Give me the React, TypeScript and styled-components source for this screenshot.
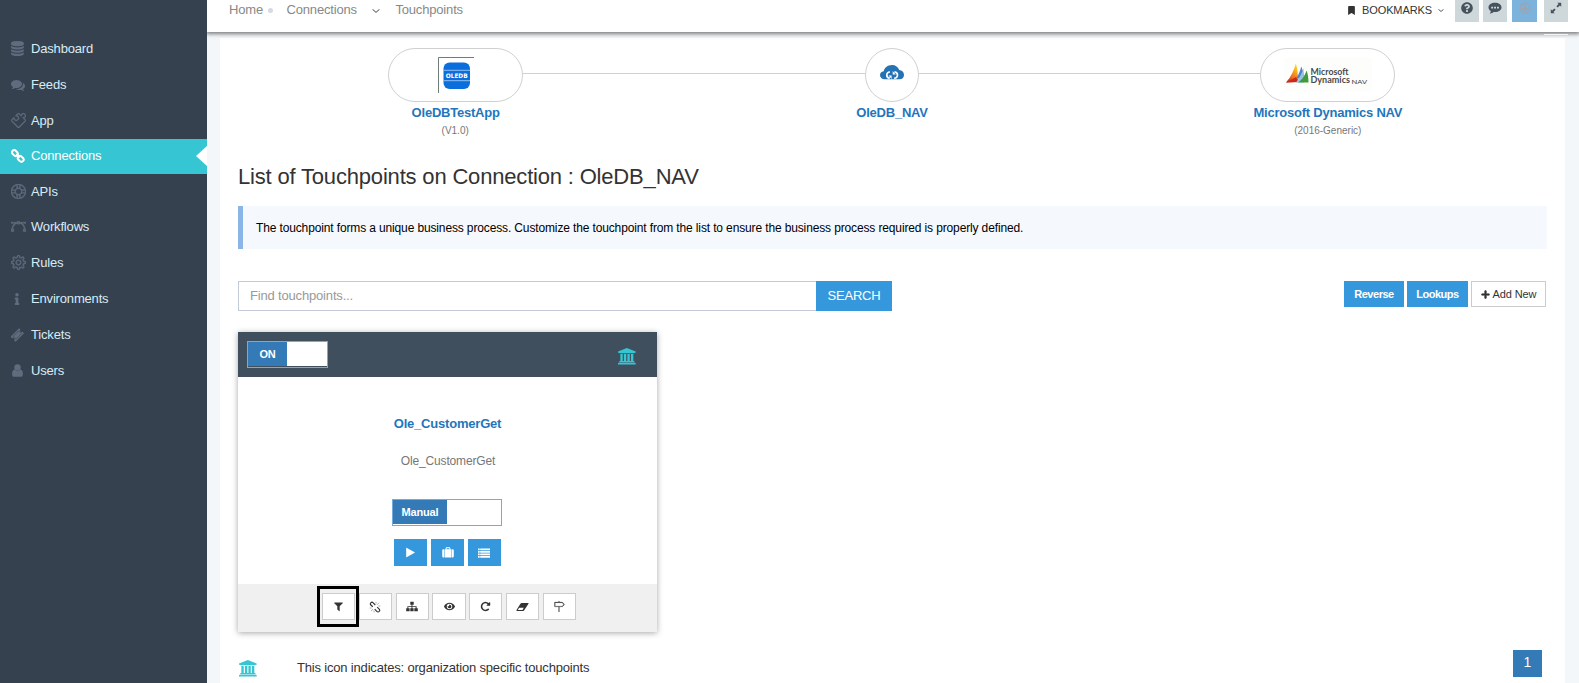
import React from 'react';
import styled, { createGlobalStyle, css } from 'styled-components';
import { FaBookmark, FaInfo, FaPlus, FaQuestionCircle, FaEye } from 'react-icons/fa';
import { SlDirection, SlPuzzle, SlSettings, SlSupport, SlVector } from 'react-icons/sl';

const GlobalStyle = createGlobalStyle`
  *, *::before, *::after { box-sizing: border-box; }
  body {
    margin: 0;
    overflow: hidden;
    background: #f4f7f9;
    color: #333;
    font: 13px/18px "Liberation Sans", Arial, sans-serif;
  }
  button, input { font-family: inherit; margin: 0; }
  svg { display: block; flex: none; }
`;

const Page = styled.div`
  display: flex;
  height: 683px;
  overflow: hidden;
`;

const Sidebar = styled.nav`
  width: 207px;
  flex: none;
  padding-top: 31px;
  background: #364150;
`;

const NavItem = styled.a<{ $active?: boolean; $tight?: boolean }>`
  display: flex;
  align-items: center;
  height: 35px;
  margin-bottom: ${p => (p.$tight ? 0 : 1)}px;
  padding: ${p => (p.$active ? '0 0 1px 11px' : '1px 0 0 11px')};
  color: ${p => (p.$active ? '#fff' : '#d8ecf5')};
  background: ${p => (p.$active ? '#36c6d3' : 'transparent')};
  letter-spacing: -0.17px;
  position: relative;
  ${p => p.$active && css`
    &::after {
      content: '';
      position: absolute;
      right: 0;
      top: 7px;
      border: solid transparent;
      border-width: 10.5px 11px 10.5px 0;
      border-right-color: #fff;
    }
  `}
`;

const NavIcon = styled.span<{ $active?: boolean }>`
  display: flex;
  width: 20px;
  padding-bottom: 1px;
  color: ${p => (p.$active ? '#fff' : '#606c7d')};
`;

const Main = styled.div`
  flex: 1;
  min-width: 0;
  display: flex;
  flex-direction: column;
`;

const TopBar = styled.header`
  height: 32px;
  flex: none;
  display: flex;
  padding: 0 11px 0 22px;
  background: #fff;
  box-shadow: 0 1px 4px 1px rgba(0, 0, 0, 0.5);
  clip-path: inset(0 0 -8px 0);
  position: relative;
  z-index: 1;
  color: #888;
`;

const Crumb = styled.a<{ $gap: number }>`
  height: 18px;
  margin: 1px ${p => p.$gap}px 0 0;
  letter-spacing: -0.17px;
`;

const Dot = styled.i`
  width: 5px;
  height: 5px;
  margin: 8px 13.5px 0 0;
  border-radius: 50%;
  background: #d5dbe0;
`;

const CrumbArrow = styled.span`
  margin: 9px 15.5px 0 0;
  color: #777;
`;

const Bookmarks = styled.div`
  display: flex;
  height: 18px;
  margin: 1px 11px 0 auto;
  align-items: center;
  color: #333;
  font-size: 11px;
  letter-spacing: -0.1px;
  gap: 6px;
`;

const Tool = styled.button<{ $gap: number; $on?: boolean; $tail?: boolean }>`
  display: flex;
  justify-content: center;
  width: ${p => (p.$on ? 25 : 24)}px;
  height: 22px;
  margin-right: ${p => p.$gap}px;
  padding: 2px 0 0;
  border: 0;
  background: ${p => (p.$on ? '#7cb3dc' : '#ced7da')};
  color: ${p => (p.$on ? '#9aa5b5' : '#46535f')};
  position: relative;
  ${p => p.$tail && css`
    &::after {
      content: '';
      position: absolute;
      left: 0;
      right: 0;
      top: 34px;
      height: 1px;
      background: #f2f2f2;
    }
  `}
`;

const Panel = styled.main`
  flex: 1;
  margin: 6px 14px 0 13px;
  padding: 10px 18px 0;
  background: #fff;
`;

const Flow = styled.section`
  display: grid;
  grid-template-columns: repeat(3, 1fr);
  height: 110px;
  margin: 0 1px 0 -1px;
`;

const FlowStep = styled.div`
  display: flex;
  flex-direction: column;
  align-items: center;
`;

const FlowTrack = styled.div<{ $left?: boolean; $right?: boolean }>`
  display: flex;
  width: 100%;
  height: 54px;
  &::before, &::after {
    content: '';
    flex: 1;
    height: 1px;
    margin-top: 25px;
  }
  &::before { background: ${p => (p.$left ? '#d0d0d0' : 'transparent')}; }
  &::after { background: ${p => (p.$right ? '#d0d0d0' : 'transparent')}; }
`;

const Pill = styled.div<{ $w: number }>`
  display: flex;
  justify-content: center;
  align-items: center;
  width: ${p => p.$w}px;
  height: 54px;
  padding-left: 1px;
  border: 1px solid #d0d0d0;
  border-radius: 27px;
`;

const FlowName = styled.a<{ $flush?: boolean }>`
  margin-top: 2px;
  padding-left: ${p => (p.$flush ? 0 : 1)}px;
  height: 18px;
  color: #1f76bd;
  font-weight: bold;
  letter-spacing: -0.22px;
`;

const FlowNote = styled.small`
  font-size: 10px;
  color: #777;
`;

const Title = styled.h1`
  height: 48px;
  margin: 0;
  padding-top: 4px;
  color: #333;
  font-size: 22px;
  font-weight: normal;
  line-height: 30px;
  letter-spacing: -0.18px;
`;

const Note = styled.p`
  height: 43px;
  margin: 0 0 32px;
  padding: 1px 13px 0;
  border-left: 5px solid #8bb4e7;
  background: #f5f8fd;
  color: #000;
  font-size: 12px;
  line-height: 43px;
  letter-spacing: -0.135px;
`;

const Toolbar = styled.div`
  display: flex;
  height: 51px;
  align-items: flex-start;
`;

const SearchInput = styled.input`
  width: 578px;
  height: 30px;
  padding: 0 11px 2px;
  border: 1px solid #c2cad8;
  border-right: 0;
  font-size: 13px;
  letter-spacing: -0.17px;
  &::placeholder { color: #999; opacity: 1; }
`;

const SearchButton = styled.button`
  width: 76px;
  height: 30px;
  padding: 0 0 2px;
  border: 0;
  background: #3598dc;
  color: #fff;
  font-size: 13px;
  letter-spacing: -0.2px;
`;

const Actions = styled.div`
  display: flex;
  gap: 3px;
  margin-left: auto;
  padding-right: 1px;
`;

const Action = styled.button<{ $w: number; $plain?: boolean }>`
  display: flex;
  align-items: center;
  justify-content: center;
  gap: 3px;
  width: ${p => p.$w}px;
  height: 26px;
  padding: 0;
  border: ${p => (p.$plain ? '1px solid #ccc' : '0')};
  background: ${p => (p.$plain ? '#fff' : '#3598dc')};
  color: ${p => (p.$plain ? '#333' : '#fff')};
  font-size: 11px;
  font-weight: ${p => (p.$plain ? 'normal' : 'bold')};
  letter-spacing: ${p => (p.$plain ? -0.1 : -0.48)}px;
`;

const Card = styled.article`
  width: 419px;
  height: 300px;
  display: flex;
  flex-direction: column;
  box-shadow: 0 1px 6px rgba(0, 0, 0, 0.35);
`;

const CardHead = styled.div`
  display: flex;
  justify-content: space-between;
  height: 45px;
  padding: 9px 21px 0 9px;
  background: #3f4f5e;
  color: #36c6d3;
`;

const BankIcon = styled.span`
  padding-top: 7px;
`;

const Switch = styled.div<{ $w: number; $on: number; $dark?: boolean }>`
  display: flex;
  width: ${p => p.$w}px;
  height: 27px;
  padding-bottom: 1px;
  border: 1px solid #75aadb;
  background: ${p => (p.$dark ? '#3f4f5e' : '#fff')};
  &::after {
    content: '';
    flex: 1;
    background: #fff;
  }
  & > span {
    width: ${p => p.$on}px;
    background: #337ab7;
    color: #fff;
    font-size: 11px;
    font-weight: bold;
    line-height: 24px;
    text-align: center;
    letter-spacing: -0.15px;
  }
`;

const CardBody = styled.div`
  display: flex;
  flex-direction: column;
  align-items: center;
  height: 207px;
  padding: 38px 1px 0 0;
`;

const CardTitle = styled.a`
  height: 18px;
  padding-left: 1px;
  color: #1f76bd;
  font-weight: bold;
  letter-spacing: -0.2px;
`;

const CardText = styled.p`
  height: 18px;
  margin: 19px 0 29px;
  padding-left: 2px;
  color: #777;
  font-size: 12px;
  letter-spacing: -0.15px;
`;

const Buttons = styled.div<{ $top: number; $shift?: number }>`
  display: flex;
  justify-content: center;
  gap: 3.7px;
  padding: ${p => p.$top}px 0 0 ${p => p.$shift ?? 0}px;
`;

const IconButton = styled.button<{ $blue?: boolean; $marked?: boolean }>`
  display: flex;
  align-items: center;
  justify-content: center;
  width: 33.2px;
  height: 27px;
  padding: 0;
  border: ${p => (p.$blue ? '0' : '1px solid #ccc')};
  background: ${p => (p.$blue ? '#3598dc' : '#fff')};
  color: ${p => (p.$blue ? '#fff' : '#333')};
  position: relative;
  ${p => p.$marked && css`
    z-index: 1;
    &::after {
      content: '';
      position: absolute;
      inset: -8px -5px -8px -6px;
      border: 3px solid #000;
    }
  `}
`;

const CardFoot = styled.div`
  height: 48px;
  background: #f0f0f0;
`;

const Legend = styled.footer`
  display: flex;
  align-items: flex-start;
  padding: 18px 5px 0 1px;
`;

const LegendIcon = styled.span`
  width: 58px;
  padding-top: 10px;
  color: #36c6d3;
`;

const LegendText = styled.span`
  padding-top: 9px;
  letter-spacing: -0.18px;
`;

const PageNumber = styled.a`
  width: 29px;
  height: 27px;
  margin-left: auto;
  background: #337ab7;
  color: #fff;
  font-size: 14px;
  line-height: 25px;
  text-align: center;
`;

const Glyph = ({ d, w = 1792, h = 1792, size }: { d: string; w?: number; h?: number; size: number }) => (
  <svg width={(size * w) / h} height={size} viewBox={`0 0 ${w} ${h}`} fill="currentColor"><path d={d} /></svg>
);

const DISC = 'q237 0 443-43t325-127v170q0 69-103 128t-280 93.500-385 34.500-385-34.500-280-93.500-103-128v-170q119 84 325 127t443 43z';
const GLYPHS = {
  bank: 'M960 0l960 384v128h-128q0 26-20.500 45t-48.500 19h-1526q-28 0-48.500-19t-20.500-45h-128v-128zM256 640h256v768h128v-768h256v768h128v-768h256v768h128v-768h256v768h59q28 0 48.500 19t20.500 45v64h-1664v-64q0-26 20.500-45t48.500-19h59v-768zM1851 1600q28 0 48.500 19t20.500 45v128h-1920v-128q0-26 20.500-45t48.500-19h1782z',
  database: `M768 768${DISC}M768 1536${DISC}M768 1152${DISC}M768 0q208 0 385 34.500t280 93.500 103 128v128q0 69-103 128t-280 93.500-385 34.500-385-34.500-280-93.500-103-128v-128q0-69 103-128t280-93.500 385-34.500z`,
  comments: 'M1408 768q0 139-94 257t-256.500 186.500-353.500 68.500q-86 0-176-16-124 88-278 128-36 9-86 16h-3q-11 0-20.500-8t-11.500-21q-1-3 1-16l8-14 60-66q50-60 68-112-124-72-195-177t-71-224q0-139 94-257t256.500-186.500 353.500-68.500 353.500 68.500 256.500 186.500 94 257zM1792 1024q0 120-71 224.500t-195 176.500q18 52 68 112l60 66 8 14 1 16q-3 14-13 22t-22 7q-50-7-86-16-154-40-278-128-90 16-176 16-271 0-472-132 58 4 88 4 161 0 309-45t264-129q125-92 192-212t67-254q0-77-23-152 129 71 204 178t75 230z',
  play: 'M1576 927l-1328 738q-23 13-39.500 3t-16.500-36v-1472q0-26 16.500-36t39.500 3l1328 738q23 13 23 31t-23 31z',
  filter: 'M1595 295q17 41-14 70l-493 493v742q0 42-39 59-13 5-25 5-27 0-45-19l-256-256q-19-19-19-45v-486l-493-493q-31-29-14-70 17-39 59-39h1280q42 0 59 39z',
  repeat: 'M1664 256v448q0 26-19 45t-45 19h-448q-42 0-59-40-17-39 14-69l138-138q-148-137-349-137-104 0-198.500 40.500t-163.500 109.500-109.500 163.500-40.500 198.500 40.500 198.500 109.500 163.500 163.500 109.500 198.500 40.500q119 0 225-52t179-147q7-10 23-12 15 0 25 9l137 138q9 8 9.500 20.500t-7.500 22.500q-109 132-264 204.500t-327 72.500q-156 0-298-61t-245-164-164-245-61-298 61-298 164-245 245-164 298-61q147 0 284.500 55.500t244.500 156.500l130-129q29-31 70-14 39 17 39 59z',
};

const Bank = () => <Glyph d={GLYPHS.bank} w={1920} h={1792} size={16.5} />;

const Chevron = ({ size }: { size: number }) => (
  <svg width={size} height={size / 2} viewBox="0 0 8 4" fill="none" stroke="currentColor" strokeWidth="1.100"><path d="M.6.4 4 3.300 7.400.4" /></svg>
);

const Chain = () => (
  <svg width="14" height="14" viewBox="0 0 14 14" fill="none" stroke="currentColor" strokeWidth="2">
    <rect x="-3.200" y="-2.100" width="6.400" height="4.400" rx="2.200" transform="translate(4 4) rotate(45)" />
    <rect x="-3.200" y="-2.100" width="6.400" height="4.400" rx="2.200" transform="translate(9.800 9.800) rotate(45)" />
    <path d="M5.200 5.200 8.600 8.600" />
  </svg>
);

const BrokenChain = () => (
  <svg width="12" height="12" viewBox="0 0 12 12" fill="none" stroke="currentColor">
    <path d="M3.800 5.800 1.800 4a1.700 1.700 0 0 1 0-2.200 1.700 1.700 0 0 1 2.400 0L6.300 4M8.200 6.200l2 1.900a1.700 1.700 0 0 1 0 2.300 1.700 1.700 0 0 1-2.400 0L5.700 8.200" strokeWidth="1.150" />
    <path d="M8 3.800 10 1.800M7 2.500V.8M9.400 5h1.900M2 10 4 8.200M.7 7h1.900M5 9.500v1.800" strokeWidth=".4" />
  </svg>
);

const Ticket = () => (
  <svg width="14" height="14" viewBox="0 0 14 14">
    <g transform="translate(6.300 7) rotate(-45)">
      <path d="M-6-3.500h12v2a1.500 1.500 0 0 0 0 3v2h-12v-2a1.500 1.500 0 0 0 0-3z" fill="currentColor" />
      <rect x="-3.800" y="-2.100" width="7.600" height="4.200" fill="none" stroke="#364150" strokeWidth=".6" />
    </g>
  </svg>
);

const Person = () => (
  <svg width="13" height="13" viewBox="0 0 13 13" fill="currentColor">
    <circle cx="6.500" cy="3.400" r="3.200" />
    <path d="M3.600 5.600C1.800 6 1.100 7.600 1.100 10.200c0 1.600.9 2.600 2.300 2.600h6.200c1.400 0 2.300-1 2.300-2.600 0-2.600-.7-4.200-2.500-4.600a4 4 0 0 1-5.800 0z" />
  </svg>
);

const SpeechDots = () => (
  <svg width="14" height="12" viewBox="0 0 14 12">
    <path d="M7 .8c3.700 0 6.500 2 6.500 4.600S10.700 10 7 10l-1.400-.1C4.500 10.900 3.200 11.300 1.800 11.500c.6-.7 1-1.400 1.100-2.400C1.400 8.200.5 6.900.5 5.400.5 2.800 3.300.8 7 .8z" fill="currentColor" />
    <path d="M3.200 4.700h1.900v1.700H3.200zM6.100 4.700H8v1.700H6.100zM9 4.700h1.900v1.700H9z" fill="#ced7da" />
  </svg>
);

const Expand = () => (
  <svg width="12" height="12" viewBox="0 0 12 12" fill="currentColor">
    <path d="M7.300.8h3.900v3.900L9.900 3.400 7.700 5.600l-1.300-1.300 2.200-2.200zM4.700 11.200H.8V7.300l1.300 1.300 2.200-2.200 1.300 1.300-2.200 2.200z" />
  </svg>
);

const Suitcase = () => (
  <svg width="12" height="11" viewBox="0 0 12 11" fill="currentColor">
    <path d="M3.700 2.200V1.100Q3.700.3 4.500.3h3q.8 0 .8.800v1.100h.7v8.300H3V2.200zM4.600 1.200v1h2.800v-1zM2.500 2.200v8.300h-1Q.2 10.500.2 9.200V3.500q0-1.300 1.300-1.300zM9.500 2.200h1q1.300 0 1.300 1.300v5.700q0 1.300-1.300 1.300h-1z" fillRule="evenodd" />
  </svg>
);

const Rows = () => (
  <svg width="12" height="10" viewBox="0 0 12 10" fill="currentColor">
    <path d="M0 .4h1.700v1.800H0zM2.200.4H12v1.800H2.200zM0 2.900h1.700v1.800H0zM2.200 2.900H12v1.800H2.200zM0 5.400h1.700v1.800H0zM2.200 5.400H12v1.800H2.200zM0 7.900h1.700v1.800H0zM2.200 7.900H12v1.800H2.200z" />
  </svg>
);

const Tree = () => (
  <svg width="12" height="11" viewBox="0 0 12 11" fill="currentColor">
    <path d="M4.300.8h3.400v3H6.400v1.400h4.200v2h1.200v3H8.300v-3h1.300V6.100H6.400v1.100h1.200v3H4.300v-3h1.200V6.100H2.300v1.100h1.300v3H.2v-3h1.200v-2h4.100V3.800H4.300z" />
  </svg>
);

const Rubber = () => (
  <svg width="13" height="10" viewBox="0 0 13 10">
    <path d="M5.500 1h6.700q.6.200.3.800L8.200 8.300q-.4.600-1 .6H.8Q.2 8.700.5 8.100L4.600 1.500Q5 1 5.500 1z" fill="currentColor" />
    <path d="M1.700 7.900 3.200 5.800h4.600L6.500 7.900z" fill="#fff" />
  </svg>
);

const OleDbLogo = () => (
  <svg width="36" height="36" viewBox="0 0 36 36">
    <path d="M.5 36V.5H36" fill="none" stroke="#6d7d78" />
    <rect x="5.500" y="5.500" width="26.500" height="26.500" rx="6" fill="#0a6fdc" />
    <path d="M5.500 13.300h26.500M5.500 23.700h26.500" stroke="#8fc0f2" />
    <text x="18.700" y="20.800" fill="#fff" fontSize="6.200" fontWeight="bold" textAnchor="middle" textLength="22" lengthAdjust="spacingAndGlyphs" fontFamily="DejaVu Sans, sans-serif">OLEDB</text>
  </svg>
);

const CloudSync = () => (
  <svg width="24" height="20" viewBox="0 0 24 20">
    <path d="M4.500 14.300C2 14.300 0 12.600 0 10.300c0-2 1.400-3.700 3.700-4C4.200 3 7.600 0 12 0c3.600 0 6.200 2 7.200 5 2.900.3 4.800 2.200 4.800 4.900 0 2.500-1.900 4.400-4.500 4.400z" fill="#2572b4" />
    <path d="M10 7C8 6.800 6.800 8.300 6.800 10c0 1.700 1.200 3.100 3 3.200M14.200 13.200c2 .2 3.300-1.400 3.300-3.100 0-1.700-1.200-3-3-3.200" fill="none" stroke="#fff" strokeWidth="1.700" />
    <path d="M8.600 10.600h3v3.400zM15.700 9.500h-3v-3.400z" fill="#fff" />
  </svg>
);

const DynamicsLogo = () => (
  <svg width="88" height="34" viewBox="0 0 88 34">
    <defs>
      <linearGradient id="sail" x1="0" y1="1" x2=".6" y2="0">
        <stop offset="0" stopColor="#b5121b" />
        <stop offset=".45" stopColor="#f0701e" />
        <stop offset="1" stopColor="#fbd41f" />
      </linearGradient>
    </defs>
    <rect width="88" height="34" fill="#fdfefc" />
    <path d="M2 24.500C7 19 10 12 11.800 5.500 13.500 10 14 16 14 22z" fill="url(#sail)" />
    <path d="M2 24.800 12 19l3 5z" fill="#c52a1c" />
    <path d="M12.500 20C15 16 16.500 12 17.200 8.500 19 12 20 17 20 22z" fill="#4f83c4" />
    <path d="M12 24.500C16 19 18.500 14 19.500 10L20 24.500z" fill="#9dbfe3" />
    <path d="M14 24.600C19 21 21 17 22.500 12.500 24 16 24.500 20 24.500 24.600z" fill="#3f9b3d" />
    <g fontFamily="Lato, sans-serif" fontWeight="bold" fill="#4a4a4a" fontSize="8.600">
      <text x="26.500" y="16.500" textLength="38" lengthAdjust="spacingAndGlyphs">Microsoft</text>
      <text x="26.500" y="25" textLength="39.500" lengthAdjust="spacingAndGlyphs">Dynamics</text>
    </g>
    <text x="67.500" y="25.500" fontFamily="Lato, sans-serif" fontSize="6.300" fill="#333" textLength="15.500" lengthAdjust="spacingAndGlyphs">NAV</text>
  </svg>
);

const DownCircle = () => (
  <svg width="12" height="12" viewBox="0 0 12 12" fill="none" stroke="currentColor" strokeWidth="1.700">
    <circle cx="6" cy="6" r="4.900" />
    <path d="M6 2.800v5M3.500 6 6 8.500 8.500 6" />
  </svg>
);

const line = { size: 15, stroke: 'currentColor', strokeWidth: 28 };

const NAV: { label: string; icon: React.ReactNode; active?: boolean; tight?: boolean }[] = [
  { label: 'Dashboard', icon: <Glyph d={GLYPHS.database} w={1536} size={15} /> },
  { label: 'Feeds', icon: <Glyph d={GLYPHS.comments} size={14} /> },
  { label: 'App', icon: <SlPuzzle {...line} /> },
  { label: 'Connections', icon: <Chain />, active: true, tight: true },
  { label: 'APIs', icon: <SlSupport {...line} />, tight: true },
  { label: 'Workflows', icon: <SlVector {...line} /> },
  { label: 'Rules', icon: <SlSettings {...line} /> },
  { label: 'Environments', icon: <FaInfo size={12} /> },
  { label: 'Tickets', icon: <Ticket /> },
  { label: 'Users', icon: <Person /> },
];

export default function App() {
  return (
    <>
      <GlobalStyle />
      <Page>
        <Sidebar>
          {NAV.map(n => (
            <NavItem key={n.label} $active={n.active} $tight={n.tight}>
              <NavIcon $active={n.active}>{n.icon}</NavIcon>
              {n.label}
            </NavItem>
          ))}
        </Sidebar>
        <Main>
          <TopBar>
            <Crumb $gap={5}>Home</Crumb>
            <Dot />
            <Crumb $gap={15}>Connections</Crumb>
            <CrumbArrow><Chevron size={8} /></CrumbArrow>
            <Crumb $gap={0}>Touchpoints</Crumb>
            <Bookmarks>
              <FaBookmark size={9} />
              BOOKMARKS
              <Chevron size={6} />
            </Bookmarks>
            <Tool $gap={4}><FaQuestionCircle size={12} /></Tool>
            <Tool $gap={5}><SpeechDots /></Tool>
            <Tool $gap={7} $on><DownCircle /></Tool>
            <Tool $gap={0} $tail><Expand /></Tool>
          </TopBar>
          <Panel>
            <Flow>
              <FlowStep>
                <FlowTrack $right><Pill $w={135}><OleDbLogo /></Pill></FlowTrack>
                <FlowName>OleDBTestApp</FlowName>
                <FlowNote>(V1.0)</FlowNote>
              </FlowStep>
              <FlowStep>
                <FlowTrack $left $right><Pill $w={54}><CloudSync /></Pill></FlowTrack>
                <FlowName>OleDB_NAV</FlowName>
              </FlowStep>
              <FlowStep>
                <FlowTrack $left><Pill $w={135}><DynamicsLogo /></Pill></FlowTrack>
                <FlowName $flush>Microsoft Dynamics NAV</FlowName>
                <FlowNote>(2016-Generic)</FlowNote>
              </FlowStep>
            </Flow>
            <Title>List of Touchpoints on Connection : OleDB_NAV</Title>
            <Note>
              The touchpoint forms a unique business process. Customize the touchpoint from the list to ensure the
              business process required is properly defined.
            </Note>
            <Toolbar>
              <SearchInput placeholder="Find touchpoints..." />
              <SearchButton>SEARCH</SearchButton>
              <Actions>
                <Action $w={60}>Reverse</Action>
                <Action $w={61}>Lookups</Action>
                <Action $w={75} $plain><FaPlus size={9} stroke="currentColor" strokeWidth={30} />Add New</Action>
              </Actions>
            </Toolbar>
            <Card>
              <CardHead>
                <Switch $w={81} $on={39} $dark><span>ON</span></Switch>
                <BankIcon><Bank /></BankIcon>
              </CardHead>
              <CardBody>
                <CardTitle>Ole_CustomerGet</CardTitle>
                <CardText>Ole_CustomerGet</CardText>
                <Switch $w={110} $on={54}><span>Manual</span></Switch>
                <Buttons $top={13} $shift={1}>
                  <IconButton $blue><Glyph d={GLYPHS.play} size={11} /></IconButton>
                  <IconButton $blue><Suitcase /></IconButton>
                  <IconButton $blue><Rows /></IconButton>
                </Buttons>
              </CardBody>
              <CardFoot>
                <Buttons $top={9} $shift={3}>
                  <IconButton $marked><Glyph d={GLYPHS.filter} size={11} /></IconButton>
                  <IconButton><BrokenChain /></IconButton>
                  <IconButton><Tree /></IconButton>
                  <IconButton><FaEye size={11} /></IconButton>
                  <IconButton><Glyph d={GLYPHS.repeat} size={11} /></IconButton>
                  <IconButton><Rubber /></IconButton>
                  <IconButton><SlDirection size={11} stroke="currentColor" strokeWidth={20} /></IconButton>
                </Buttons>
              </CardFoot>
            </Card>
            <Legend>
              <LegendIcon><Bank /></LegendIcon>
              <LegendText>This icon indicates: organization specific touchpoints</LegendText>
              <PageNumber>1</PageNumber>
            </Legend>
          </Panel>
        </Main>
      </Page>
    </>
  );
}
